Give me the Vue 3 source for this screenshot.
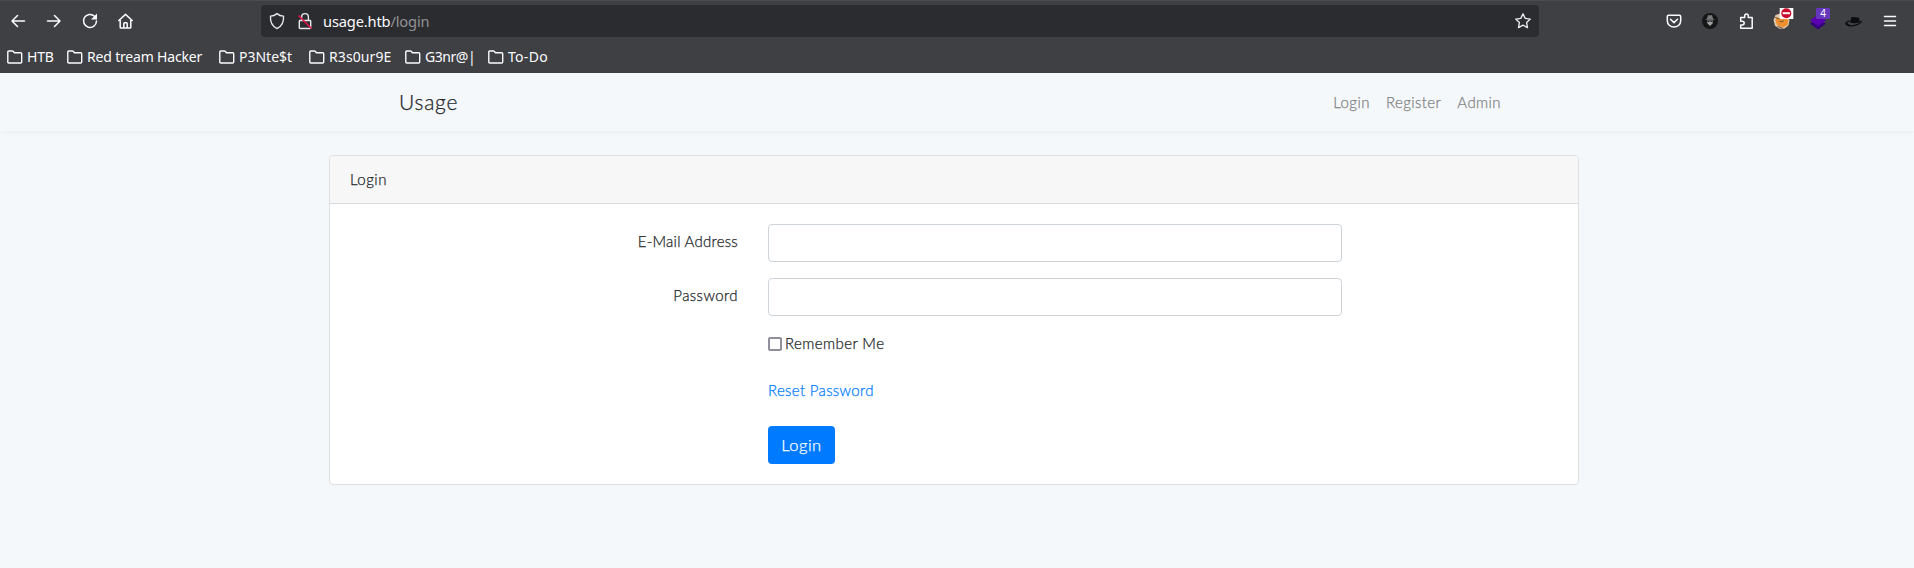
<script setup>
const bookmarks = [
  { name: 'HTB', width: 60, spacing: -0.2 },
  { name: 'Red tream Hacker', width: 152, spacing: -0.18 },
  { name: 'P3Nte$t', width: 90, spacing: 0 },
  { name: 'R3s0ur9E', width: 96, spacing: 0.1 },
  { name: 'G3nr@|', width: 83, spacing: -0.45 },
  { name: 'To-Do', width: 70, spacing: 0.3 },
]
const links = ['Login', 'Register', 'Admin']
</script>

<template>
  <div class="window">
    <header class="chrome">
      <div class="toolbar">
        <div class="tools">
          <svg viewBox="0 0 36 36" class="ico"><path d="M24.500 18H12M17.500 12.500 12 18l5.500 5.500" /></svg>
          <svg viewBox="0 0 36 36" class="ico"><path d="M11.500 18H24M18.500 12.500 24 18l-5.500 5.500" /></svg>
          <svg viewBox="0 0 36 36" class="ico"><path d="M22.500 13.200A6.500 6.500 0 1 0 24.500 18" /><path d="M25 10.500v6h-6z" fill="#fbfbfe" stroke="none" /></svg>
          <svg viewBox="0 0 36 36" class="ico"><path d="M10.800 17.500 17.500 11.400l6.700 6.100M12.200 17v7.200q0 .8.800.800h9q.8 0 .8-.800V17M15.800 25v-4.500q0-.8.800-.8h1.800q.8 0 .8.800V25" /></svg>
        </div>
        <div class="address">
          <svg viewBox="0 0 32 32" class="shield"><path d="M16 8.600c2.200 1.900 4.400 2.400 6.500 2.500.5 6.100-1.500 10.100-6.500 12.500-5-2.400-7-6.400-6.500-12.500 2.100-.1 4.300-.6 6.500-2.500z" /></svg>
          <svg viewBox="0 0 24 32" class="lock"><path d="M7 15.500h10q.7 0 .7.700v6.600q0 .7-.7.700H7q-.7 0-.7-.7v-6.600q0-.7.700-.7zM8.600 15.500V12a3.400 3.400 0 0 1 6.800 0v3.500" /><path d="M5.500 10.500 18.500 23.500" class="strike" /></svg>
          <span class="url">usage.htb<i>/login</i></span>
          <svg viewBox="0 0 32 32" class="star"><path d="m16 8.800 2.200 4.600 5.100.7-3.700 3.500.9 5-4.500-2.400-4.500 2.400.9-5-3.700-3.500 5.100-.7z" /></svg>
        </div>
        <div class="tools extensions">
          <svg viewBox="0 0 36 36" class="ico"><path d="M12.500 12.300h11q1.200 0 1.200 1.200v4.200a6.700 6.400 0 0 1-13.400 0v-4.200q0-1.200 1.200-1.200zM14.500 16.300l3.500 3.300 3.500-3.300" /></svg>
          <svg viewBox="0 0 36 36" class="ico flat"><circle cx="18" cy="18" r="8" fill="#161617" /><path d="M15 15.500 16 12q2 .8 4 0l1 3.500 2 1.200H13z" fill="#77797b" /><path d="M15 17.500h6l-.5 3L18 23l-2.500-2.500z" fill="#a0a2a3" /><path d="M15.500 18h2v1h-2zm3 0h2v1h-2z" fill="#222" /></svg>
          <svg viewBox="0 0 36 36" class="ico"><path d="M12.700 25.200v-3.200h1.600a1.900 1.900 0 0 0 0-3.800h-1.600v-3.700h4v-1.600a1.800 1.800 0 0 1 3.600 0v1.600h3.900v10.700z" /></svg>
          <svg viewBox="0 0 36 36" class="ico flat"><path d="m9.500 17 2-5 6-2 6 2 2 5-1 5.500-4 3-5 .3-4.500-3z" fill="#dfc7aa" /><path d="m11.500 17.500 1-3 8 1 4 1.200-1 5.300-4.500 2.500-6-2.500z" fill="#f09030" /><path d="M16 18.500q2 1 3.500-.5M11.500 14.500l4 1.500M14 23.500l4 1.500" stroke="#69513e" stroke-width="1" fill="none" /><rect x="15.700" y="5" width="13.600" height="11" fill="#fff" /><circle cx="22.300" cy="10.200" r="5" fill="#c90d2c" /><path d="M18.700 9.200h7.200v2h-7.200z" fill="#fff" /></svg>
          <svg viewBox="0 0 36 36" class="ico flat"><path d="m10 20.500 8-4 8 4-8 6z" fill="#35007b" /><path d="m10 17.500 8-6 8 6-8 5.500z" fill="#5a00b0" /><rect x="16" y="5" width="14" height="11" rx="1" fill="#6538bb" /><text x="23" y="14">4</text></svg>
          <svg viewBox="0 0 36 36" class="ico flat"><path d="M14 19.500l1-4.300q.3-1.400 1.800-1.200l5.200.4q1.500.2 1.300 1.700l-.2 3.400q-5 1.500-9.100 0z" fill="#0c0d0e" /><path d="M13.500 18.200q-4 .6-3.600 2.600 1.400 2.800 7.500 1.800 6.500-1 8-4-1-.8-2.600.2M10.500 19.500q1 3 4.500 3.500" stroke="#0c0d0e" stroke-width="1.200" fill="none" /></svg>
          <svg viewBox="0 0 36 36" class="ico"><path d="M12.500 13.500h11M12.500 18h11M12.500 22.500h11" /></svg>
        </div>
      </div>
      <nav class="bookmarks">
        <a v-for="b in bookmarks" :key="b.name" :style="{ width: b.width + 'px', letterSpacing: b.spacing + 'px' }">
          <svg viewBox="0 0 16 16"><path d="M1.800 2h3.700q.5 0 .9.500l1 1.300h6.300q1 0 1 1V13q0 1-1 1H1.800q-1 0-1-1V3q0-1 1-1z" /></svg>
          <span>{{ b.name }}</span>
        </a>
      </nav>
    </header>

    <div class="navbar">
      <a class="brand">Usage</a>
      <nav class="links"><a v-for="l in links" :key="l">{{ l }}</a></nav>
    </div>

    <main class="card">
      <div class="card-header">Login</div>
      <form class="card-body" @submit.prevent>
        <div class="row"><label for="email" class="email">E-Mail Address</label><input id="email" type="text"></div>
        <div class="row"><label for="password">Password</label><input id="password" type="password"></div>
        <label class="remember"><input type="checkbox"><span>Remember Me</span></label>
        <a class="reset">Reset Password</a>
        <button type="submit">Login</button>
      </form>
    </main>
  </div>
</template>

<style>
body { margin: 0; background: #f5f8fa; }
</style>

<style scoped>
* { box-sizing: border-box; }
.window { height: 568px; overflow: hidden; background: #f5f8fa; color: #212529; font: 300 15px/23px Lato, sans-serif; letter-spacing: 0.42px; -webkit-text-stroke: 0.25px currentColor; }
.chrome { height: 73px; background: #3f4044; border-top: 1px solid #4a4b50; color: #fbfbfe; font-family: "Noto Sans", sans-serif; font-weight: 400; letter-spacing: 0; -webkit-text-stroke: 0; }
.toolbar { display: flex; align-items: center; height: 40px; }
.tools { display: flex; width: 261px; }
.ico { width: 36px; height: 36px; fill: none; stroke: #fbfbfe; stroke-width: 1.5; stroke-linecap: round; stroke-linejoin: round; }
.flat { stroke: none; }
.flat text { font: 10px "Noto Sans", sans-serif; fill: #fff; text-anchor: middle; }
.address { display: flex; align-items: center; width: 1278px; height: 32px; border-radius: 4px; background: #2b2c30; }
.address svg { fill: none; stroke: #e8e8eb; stroke-width: 1.400; stroke-linejoin: round; }
.shield, .star { width: 32px; height: 32px; }
.lock { width: 24px; height: 32px; }
.address .strike { stroke: #e2144c; stroke-width: 1.600; }
.url { margin-left: 6px; font-size: 14.67px; letter-spacing: -0.16px; }
.url i { font-style: normal; color: #929296; }
.star { margin-left: auto; }
.extensions { width: 252px; margin-left: 117px; }
.bookmarks { display: flex; height: 31px; padding-left: 7px; font-size: 14px; }
.bookmarks a { display: flex; align-items: center; gap: 4px; white-space: nowrap; }
.bookmarks svg { width: 16px; height: 16px; flex: none; fill: none; stroke: #fbfbfe; stroke-width: 1.400; }
.navbar { display: flex; align-items: center; justify-content: space-between; height: 58px; padding: 0 413px 0 399px; box-shadow: 0 2px 4px rgba(0, 0, 0, 0.04); }
.brand { padding-bottom: 1px; font-size: 21px; letter-spacing: 0.75px; }
.links { display: flex; gap: 16px; padding-top: 1px; color: #808284; }
.card { width: 1250px; height: 330px; margin: 24px 0 0 329px; border: 1px solid #dfe0e1; border-radius: 4px; background: #fff; }
.card-header { height: 48px; padding: 12px 20px; border-bottom: 1px solid #d9dadb; border-radius: 3px 3px 0 0; background: #f7f7f7; letter-spacing: 0.5px; }
.card-body { display: flex; flex-direction: column; align-items: flex-start; padding-top: 20px; }
.row { display: flex; margin-bottom: 16px; }
.row label { width: 438px; padding: 6px 30px 0 0; text-align: right; }
.row .email { letter-spacing: 0.25px; }
.row input { width: 574px; height: 38px; border: 1px solid #ced4da; border-radius: 4px; background: #fff; }
.remember { display: flex; margin-left: 438px; }
.remember input { appearance: none; width: 14px; height: 14px; margin: 5px 3px 0 0; border: 2px solid #8f8f9d; border-radius: 2px; }
.reset { margin: 24px 0 24px 438px; color: #007bff; letter-spacing: 0.33px; }
button { width: 67px; height: 38px; margin-left: 438px; padding: 0; border: 0; border-radius: 4px; background: #007bff; color: #fff; font: 300 16.500px/24px Lato, sans-serif; letter-spacing: 0.5px; }
</style>
